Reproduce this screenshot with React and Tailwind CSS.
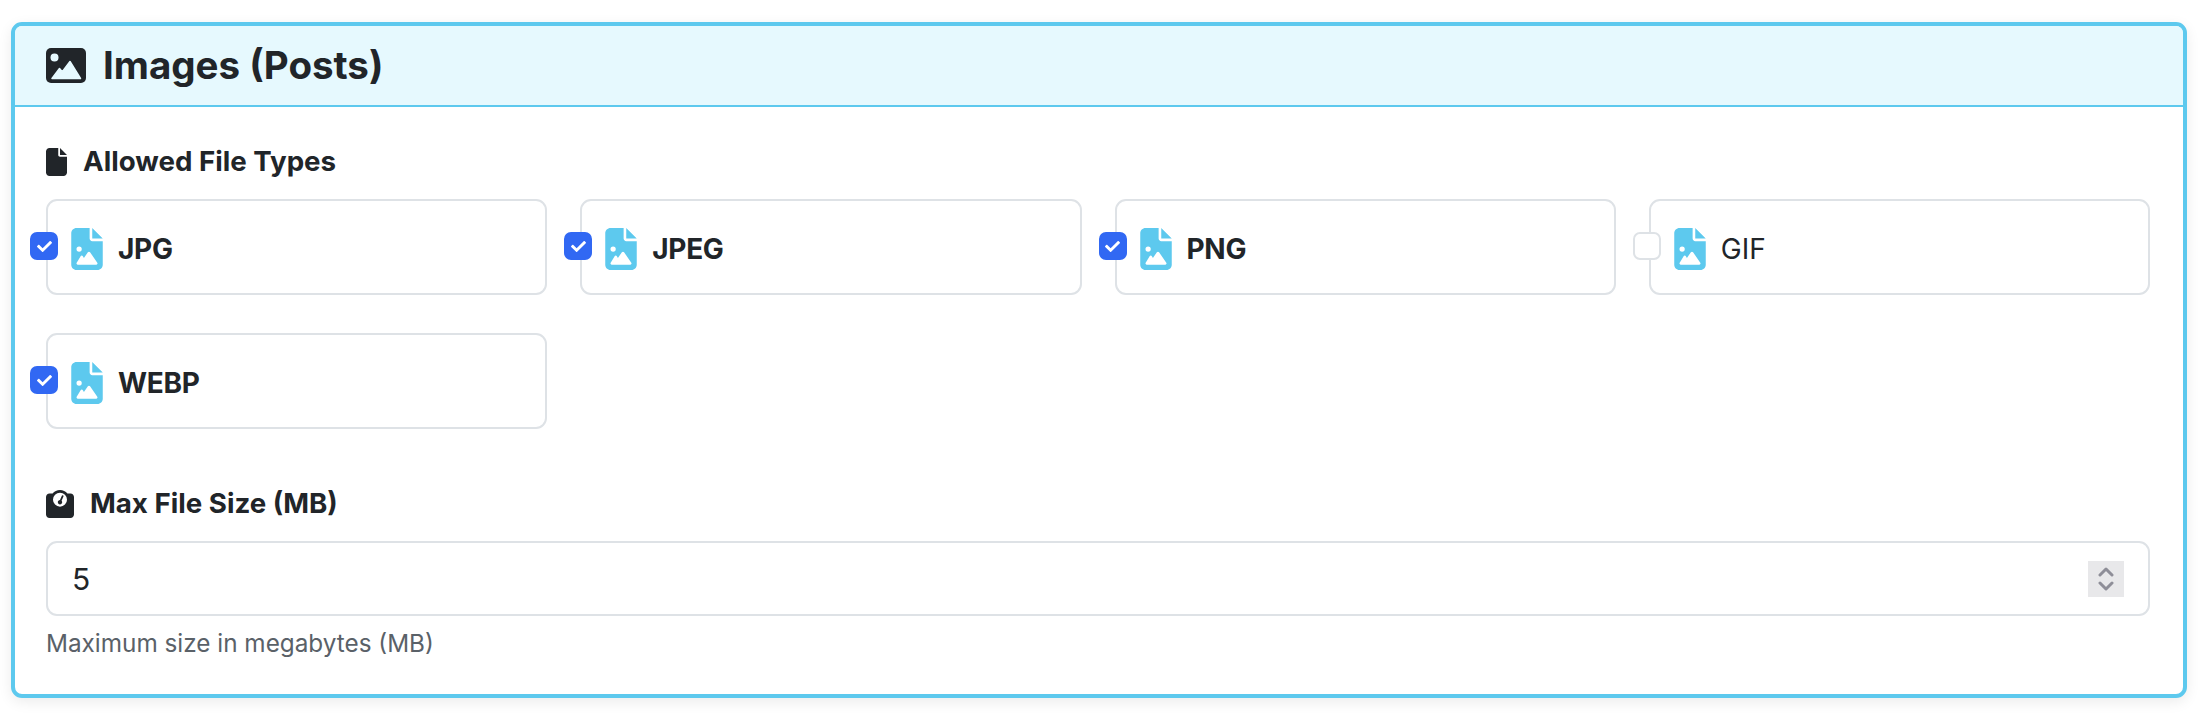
import { FaCheck } from 'react-icons/fa';
import { FaFile, FaFileImage, FaWeightScale } from 'react-icons/fa6';

const TYPES = [
  { label: 'JPG', checked: true },
  { label: 'JPEG', checked: true },
  { label: 'PNG', checked: true },
  { label: 'GIF', checked: false },
  { label: 'WEBP', checked: true },
];

function ImageIcon() {
  return (
    <svg viewBox="0 0 40 35" className="h-[35px] w-[40px]">
      <rect width="40" height="35" rx="5" fill="#212529" />
      <circle cx="8.5" cy="9.5" r="4" fill="#e6f9fe" />
      <path
        d="M6 30.5 L13.5 20.5 L16.3 23.7 L24 13.5 L34.5 30.5 Z"
        fill="#e6f9fe"
        stroke="#e6f9fe"
        strokeWidth="1.5"
        strokeLinejoin="round"
      />
    </svg>
  );
}

function Spinner() {
  return (
    <span className="flex h-[36px] w-[36px] items-center justify-center bg-[#e8e8ea]">
      <svg viewBox="0 0 16 26" className="h-[26px] w-[16px]" fill="none" stroke="#8e8e98" strokeWidth="3" strokeLinecap="round" strokeLinejoin="round">
        <path d="M2 9 L8 3 L14 9" />
        <path d="M2 17 L8 23 L14 17" />
      </svg>
    </span>
  );
}

function TypeCard({ label, checked }) {
  return (
    <div className="relative flex h-[96px] items-center rounded-[11px] border-2 border-[#dee2e6] bg-white pl-[23px] pt-[3px]">
      <span
        className={`absolute left-[-18px] top-[31px] flex h-[28px] w-[28px] items-center justify-center rounded-[7px] border-2 ${
          checked ? 'border-[#3168f3] bg-[#3168f3]' : 'border-[#dee2e6] bg-white'
        }`}
      >
        {checked && <FaCheck className="text-[15px] text-white" />}
      </span>
      <FaFileImage className="h-[42px] w-[32px] text-[#5dc9ee]" />
      <span className={`ml-[15px] text-[28px] text-[#212529] ${checked ? 'font-bold tracking-[-0.3px]' : 'font-normal'}`}>{label}</span>
    </div>
  );
}

export default function App() {
  return (
    <div className="h-[720px] bg-white px-[11px] pt-[22px] font-['Inter',sans-serif] text-[#212529]">
      <div className="w-[2176px] overflow-hidden rounded-[11px] border-[4px] border-[#5dc9ee] bg-white shadow-[0_4px_14px_rgba(0,0,0,0.08)]">
        {/* Header */}
        <div className="flex h-[81px] items-center gap-[17px] border-b-2 border-[#5dc9ee] bg-[#e6f9fe] pl-[31px]">
          <ImageIcon />
          <h2 className="text-[38.5px] font-bold leading-none">Images (Posts)</h2>
        </div>

        <div className="px-[31px] pt-[37px]">
          {/* Allowed types */}
          <div className="flex h-[36px] items-center gap-[16px] text-[27.7px] font-bold">
            <FaFile className="h-[28px] w-[21px]" />
            <span>Allowed File Types</span>
          </div>
          <div className="mt-[19px] grid w-[2104px] grid-cols-4 gap-x-[33px] gap-y-[38px]">
            {TYPES.map(t => (
              <TypeCard key={t.label} label={t.label} checked={t.checked} />
            ))}
          </div>

          {/* Max size */}
          <div className="mt-[57px] flex h-[36px] items-center gap-[16px] text-[27.7px] font-bold">
            <FaWeightScale className="h-[28px] w-[28px]" />
            <span>Max File Size (MB)</span>
          </div>
          <div className="mt-[19px] flex h-[75px] w-[2104px] items-center justify-between rounded-[11px] border-2 border-[#dee2e6] bg-white pl-[24px] pr-[24px]">
            <span className="text-[30px] leading-none">5</span>
            <Spinner />
          </div>
          <p className="mt-[12px] pb-[36px] text-[24.3px] leading-[30px] text-[#5a6168]">Maximum size in megabytes (MB)</p>
        </div>
      </div>
    </div>
  );
}
